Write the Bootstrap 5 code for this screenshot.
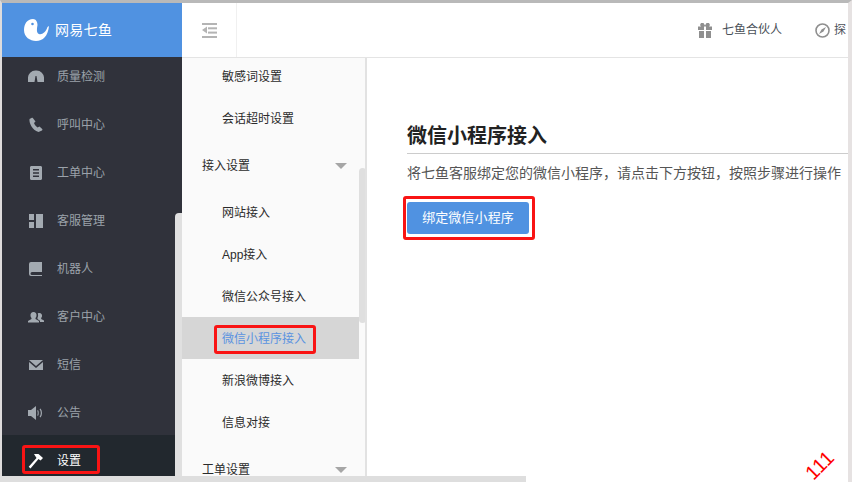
<!DOCTYPE html>
<html lang="zh"><head><meta charset="utf-8"><title>微信小程序接入</title>
<link rel="stylesheet" href="https://cdn.jsdelivr.net/npm/bootstrap@5.3.0/dist/css/bootstrap.min.css">
<style>
html,body{width:852px;height:482px;overflow:hidden}
body{background:#fff;font-family:"Liberation Sans","Noto Sans CJK SC",sans-serif;font-size:12px;position:relative;color:#222}
.shell{width:852px;height:482px;border-top:3px solid #b9b9b9;border-left:2px solid #dedcdc;border-right:4px solid #e6e2e2}
.hdr{height:55px;border-bottom:1px solid #e4e4e4;flex:none}
.brand{width:180px;background:#5092e1;color:#fff;font-size:14px;letter-spacing:.3px;padding-left:22px;gap:6px}
.fold{width:55px;border-right:1px solid #f0f0f0}
.hdr-item{color:#4a5058;gap:10px}
.hdr-links{margin-left:auto;gap:33px;margin-right:2px}
.hdr-links span{white-space:nowrap}
.cols{flex:1;min-height:0}
.rail{width:180px;background:#30323b;position:relative;overflow:hidden;margin-top:-1px}
.rail-list{margin-top:-4px}
.rail-row{height:48px;color:#9ba2aa;padding-left:26px;gap:13px;width:173px}
.rail-row svg{flex:none;width:16px;height:16px;fill:#a3aab1}
.rail-row.on{background:#22282e;color:#fff;margin-top:-2px;height:47px;padding-top:4px}
.rail-row.on svg{fill:#fff}
.rail-thumb{position:absolute;right:0;top:156px;bottom:0;width:7px;background:#e0e0e0;border-radius:4px 0 0 0}
.sub{width:185px;background:#fafafa;border-right:2px solid #e2e2e2;position:relative;overflow:hidden;color:#2b2b2b}
.sub-list{margin-top:-2px;width:177px}
.sub-row{height:42px;padding-left:40px}
.sub-group{height:52px;padding-left:20px;padding-right:12px;justify-content:space-between}
.sub-row.on{background:#d6d6d6;color:#5b93e0;margin-top:-1px;margin-bottom:1px;padding-top:2px}
.caret{width:0;height:0;border-left:6px solid transparent;border-right:6px solid transparent;border-top:6px solid #a6a6a6}
.sub-thumb{position:absolute;left:177px;top:110px;width:7px;height:155px;background:#dfdfdf;border-radius:4px}
.pane{flex:1;background:#fff;padding:63px 0 0 40px;overflow:hidden}
.pane-title{font-size:20px;font-weight:700;line-height:30px;padding-bottom:2px;border-bottom:1px solid #ccc;color:#222;margin:0 0 9px;width:460px}
.pane-text{font-size:14px;line-height:20px;color:#555;margin:0 0 19px;white-space:nowrap}
.bind{background:#5092e1;border:0;border-radius:3px;color:#fff;font-size:13px;width:122px;height:32px;padding:0;letter-spacing:.1px}
.mark-box{position:absolute;border:3px solid #f91414;border-radius:3px}
.mk1{left:22px;top:445px;width:78px;height:29px}
.mk2{left:214px;top:325px;width:102px;height:29px}
.mk3{left:403px;top:196px;width:132px;height:44px}
.scribble{position:absolute;left:804px;top:455px;color:#f00;font-size:20px;line-height:1;transform:rotate(-45deg);letter-spacing:.2px}
.hbar{position:absolute;left:0;bottom:0;width:526px;height:6px;background:#dedede}
</style></head><body>
<div class="shell d-flex flex-column">
 <div class="hdr d-flex">
  <div class="brand d-flex align-items-center">
   <svg width="25" height="22" viewBox="0 0 25 22"><path fill="#fff" fill-rule="evenodd" d="M9 0C3 0 0 5 0 11c0 7 6 11 12 11 7 0 12-5 13-15l-1.500 1c-1.500 5-5.500 8-8.500 7-3-1-2-6-1.500-9C13.500 3 12 0 9 0zM8.500 3.700a1.300 1.300 0 1 1 0 2.600 1.300 1.300 0 0 1 0-2.600z"/></svg>
   <span>网易七鱼</span>
  </div>
  <div class="fold d-flex align-items-center justify-content-center">
   <svg width="15" height="15" viewBox="0 0 15 15" fill="#b4b4b4"><rect y="0" width="15" height="2"/><rect x="6" y="4.300" width="9" height="2"/><rect x="6" y="8.600" width="9" height="2"/><rect y="13" width="15" height="2"/><path d="M5 3.500v7L0 7z"/></svg>
  </div>
  <div class="hdr-links d-flex align-items-center">
   <div class="hdr-item d-flex align-items-center">
    <svg width="14" height="15" viewBox="0 0 14 15" fill="#8f8f8f"><path d="M3 0h2.500L7 2.500 8.500 0H11l1 2-1 1.500h3V7H8V3.500H6V7H0V3.500h3L2 2zM1 8h5v7H1zm7 0h5v7H8z"/></svg>
    <span>七鱼合伙人</span>
   </div>
   <div class="hdr-item d-flex align-items-center gap-1">
    <svg width="15" height="15" viewBox="0 0 15 15"><circle cx="7.500" cy="7.500" r="6.500" fill="none" stroke="#8f8f8f" stroke-width="1.600"/><path fill="#8f8f8f" d="M11 4 8.500 8.500 4 11l2.500-4.500z"/></svg>
    <span>探</span>
   </div>
  </div>
 </div>
 <div class="cols d-flex">
  <nav class="rail">
   <div class="rail-list">
    <div class="rail-row d-flex align-items-center"><svg viewBox="0 0 16 16"><path d="M8 1.500a7.500 7.500 0 0 0-8 8v3.500h6.500L7.500 7h1l1 6H16V9.500a7.500 7.500 0 0 0-8-8z"/></svg><span>质量检测</span></div>
    <div class="rail-row d-flex align-items-center"><svg viewBox="0 0 16 16"><path d="M3.500 1 1.500 2C1 6 4 13 10.500 15l3.500-1.500c.6-.5.5-1 .2-1.400L11.500 9.500 9.500 10.500C8 9.500 6.500 7.500 6 6l1.500-1.500L5 1.200C4.500.8 4 .8 3.500 1z"/></svg><span>呼叫中心</span></div>
    <div class="rail-row d-flex align-items-center"><svg viewBox="0 0 16 16"><path fill-rule="evenodd" d="M3 1h10a2 2 0 0 1 1 1v12a2 2 0 0 1-1 1H3a2 2 0 0 1-1-1V2a2 2 0 0 1 1-1zm2 3v1.500h6V4zm0 3.300v1.500h6V7.300zm0 3.300v1.500h6v-1.500z"/></svg><span>工单中心</span></div>
    <div class="rail-row d-flex align-items-center"><svg viewBox="0 0 16 16"><path d="M1 1h5v6H1zm0 8h5v6H1zm7-8h7v14H8z"/></svg><span>客服管理</span></div>
    <div class="rail-row d-flex align-items-center"><svg viewBox="0 0 16 16"><path d="M3 1h11v10H4a1.500 1.500 0 0 0 0 3h10v1H3a2 2 0 0 1-2-2V3a2 2 0 0 1 2-2z"/></svg><span>机器人</span></div>
    <div class="rail-row d-flex align-items-center"><svg viewBox="0 0 16 16"><path d="M5.500 3a3 3 0 0 1 3 3.500c0 1-.5 2-1 2.500v1l3.500 2v1.500H0V12l3.500-2V9c-.5-.5-1-1.500-1-2.500a3 3 0 0 1 3-3.500zm6 1a2.500 2.500 0 0 1 2.500 3c0 1-.5 1.500-.8 2v1l2.800 1.500V13h-4v-1.300L9.500 10V8.800c.5-.8.600-1.500.6-2.500 0-.8-.2-1.500-.4-1.900.4-.3 1-.4 1.800-.4z"/></svg><span>客户中心</span></div>
    <div class="rail-row d-flex align-items-center"><svg viewBox="0 0 16 16"><path d="M1 3h14L8 9zM1 5l7 6 7-6v8H1z"/></svg><span>短信</span></div>
    <div class="rail-row d-flex align-items-center"><svg viewBox="0 0 16 16"><path d="M0 5h3l5-4v14l-5-4H0zM10 5c1 1.500 1 4.500 0 6l-.8-.8c.7-1 .7-3.400 0-4.400zM12.500 3.500c2 2.500 2 6.500 0 9l-.9-.8c1.600-2 1.600-5.400 0-7.400z"/></svg><span>公告</span></div>
    <div class="rail-row on d-flex align-items-center"><svg viewBox="0 0 16 16"><path d="M6 1h4.500l4.500 4-2.500 2.500-2-1.500-8 9.500-1.800-1.800L8.500 5z"/></svg><span>设置</span></div>
   </div>
   <div class="rail-thumb"></div>
  </nav>
  <aside class="sub">
   <div class="sub-list">
    <div class="sub-row d-flex align-items-center">敏感词设置</div>
    <div class="sub-row d-flex align-items-center">会话超时设置</div>
    <div class="sub-group d-flex align-items-center"><span>接入设置</span><i class="caret"></i></div>
    <div class="sub-row d-flex align-items-center">网站接入</div>
    <div class="sub-row d-flex align-items-center">App接入</div>
    <div class="sub-row d-flex align-items-center">微信公众号接入</div>
    <div class="sub-row on d-flex align-items-center">微信小程序接入</div>
    <div class="sub-row d-flex align-items-center">新浪微博接入</div>
    <div class="sub-row d-flex align-items-center">信息对接</div>
    <div class="sub-group d-flex align-items-center"><span>工单设置</span><i class="caret"></i></div>
   </div>
   <div class="sub-thumb"></div>
  </aside>
  <main class="pane">
   <h1 class="pane-title">微信小程序接入</h1>
   <p class="pane-text">将七鱼客服绑定您的微信小程序，请点击下方按钮，按照步骤进行操作</p>
   <button class="btn bind" type="button">绑定微信小程序</button>
  </main>
 </div>
</div>
<div class="hbar"></div>
<div class="mark-box mk1"></div><div class="mark-box mk2"></div><div class="mark-box mk3"></div>
<div class="scribble">111</div>
</body></html>
